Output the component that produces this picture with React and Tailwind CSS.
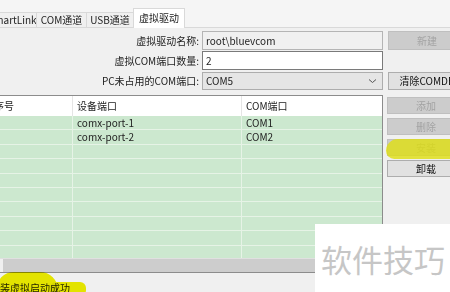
import React from "react"

const rows = [
  { dev: "comx-port-1", com: "COM1" },
  { dev: "comx-port-2", com: "COM2" },
  {}, {}, {}, {}, {}, {}, {}, {},
]

function Tab({ label, active, className = "" }) {
  if (active) {
    return (
      <div className={"h-[20px] -mb-px shrink-0 bg-white border border-b-0 border-[#d9d9d9] flex items-center justify-center pb-[1px] " + className}>
        {label}
      </div>
    )
  }
  return (
    <div className={"h-[15px] shrink-0 bg-[#f0f0f0] border border-b-0 border-[#d9d9d9] flex items-center justify-center -mr-px " + className}>
      {label}
    </div>
  )
}

function Btn({ children, disabled, h = "h-[17px]" }) {
  return (
    <div
      className={
        "w-[78px] shrink-0 flex items-center justify-center border whitespace-nowrap " + h + " " +
        (disabled
          ? "bg-[#cccccc] border-[#bfbfbf] text-[#a3a3a3]"
          : "bg-[#e1e1e1] border-[#adadad] text-[#111]")
      }
    >
      {children}
    </div>
  )
}

export default function App() {
  return (
    <div className="w-[450px] h-[292px] overflow-hidden relative bg-[#f0f0f0] text-[10px] leading-none text-[#222] font-['Noto_Sans_CJK_SC','Noto_Sans',sans-serif]">
      {/* tab strip */}
      <div className="h-[28px] flex items-end border-b border-[#d9d9d9] bg-[#f5f5f5]">
        <div className="flex items-end -ml-[12px] shrink-0">
          <Tab label="SmartLink" className="w-[49px]" />
          <Tab label="COM通道" className="w-[51px]" />
          <Tab label="USB通道" className="w-[48px]" />
          <Tab label="虚拟驱动" active className="w-[52px]" />
        </div>
      </div>

      {/* form */}
      <div className="flex flex-col gap-[1px] mt-[3px]">
        <div className="flex items-center h-[19px]">
          <div className="w-[200px] shrink-0 text-right pr-[1px]">虚拟驱动名称:</div>
          <div className="ml-[2px] w-[181px] shrink-0 h-[19px] border border-[#b4b4b4] bg-[#f0f0f0] flex items-center px-[3px]">root\bluevcom</div>
          <div className="ml-[5px] shrink-0"><Btn disabled h="h-[19px]">新建</Btn></div>
        </div>
        <div className="flex items-center h-[19px]">
          <div className="w-[200px] shrink-0 text-right pr-[1px]">虚拟COM端口数量:</div>
          <div className="ml-[2px] w-[181px] shrink-0 h-[19px] border border-[#7a7a7a] bg-white flex items-center px-[3px]">2</div>
        </div>
        <div className="flex items-center h-[18px] mt-[1px]">
          <div className="w-[200px] shrink-0 text-right pr-[1px]">PC未占用的COM端口:</div>
          <div className="ml-[2px] w-[181px] shrink-0 h-[18px] border border-[#adadad] bg-[#e5e5e5] flex items-center justify-between px-[3px]">
            <span>COM5</span>
            <svg width="9" height="6" viewBox="0 0 9 6" className="mr-[2px]">
              <path d="M1 1.5 L4.5 4.5 L8 1.5" fill="none" stroke="#555" strokeWidth="1" />
            </svg>
          </div>
          <div className="ml-[5px] shrink-0"><Btn h="h-[18px]">清除COMDB</Btn></div>
        </div>
      </div>

      {/* table + side buttons */}
      <div className="flex mt-[5px]">
        <div className="-ml-[11px] w-[394px] h-[178px] shrink-0 border border-[#8c8c8c] flex flex-col bg-white">
          <div className="flex h-[20px] shrink-0 bg-white">
            <div className="w-[83px] pl-[4px] flex items-center border-r border-[#e5e5e5]">序号</div>
            <div className="w-[169px] pl-[4px] flex items-center border-r border-[#e5e5e5]">设备端口</div>
            <div className="flex-1 pl-[4px] flex items-center">COM端口</div>
          </div>
          <div className="flex-1 overflow-hidden bg-[#cce8cf]">
            {rows.map((r, i) => (
              <div key={i} className="flex h-[14.4px] border-b border-[#e6f3e6]">
                <div className="w-[83px] border-r border-[#e6f3e6]"></div>
                <div className="w-[169px] pl-[4px] flex items-center border-r border-[#e6f3e6]">{r.dev}</div>
                <div className="flex-1 pl-[4px] flex items-center">{r.com}</div>
              </div>
            ))}
          </div>
          <div className="h-[14px] shrink-0 bg-[#cdcdcd] border-t border-[#e0e0e0] flex">
            <div className="w-[13px] bg-[#f0f0f0]"></div>
          </div>
        </div>
        <div className="ml-[4px] mt-[2px] flex flex-col gap-[4px] shrink-0">
          <Btn disabled>添加</Btn>
          <Btn disabled>删除</Btn>
          <Btn disabled>安装</Btn>
          <Btn>卸载</Btn>
        </div>
      </div>

      {/* status */}
      <div className="pt-[10px] -ml-[10px] whitespace-nowrap relative z-10">安装虚拟启动成功</div>

      {/* highlighter marks */}
      <div className="absolute left-[386px] top-[139px] w-[70px] h-[20px] rounded-l-[14px] rounded-tl-[20px] bg-[#dede10]/80"></div>
      <div className="absolute -left-[4px] top-[272px] w-[62px] h-[26px] rounded-t-[18px] bg-[#f2f200] mix-blend-multiply z-20"></div>
      <div className="absolute left-[50px] top-[282px] w-[36px] h-[14px] rounded-[6px] bg-[#f2f200] mix-blend-multiply z-20"></div>

      {/* watermark */}
      <div className="absolute left-[315px] top-[224px] w-[135px] h-[68px] bg-white flex items-center pl-[6px] z-30">
        <span className="text-[31px] text-[#c6c6c6]">软件技巧</span>
      </div>
    </div>
  )
}
